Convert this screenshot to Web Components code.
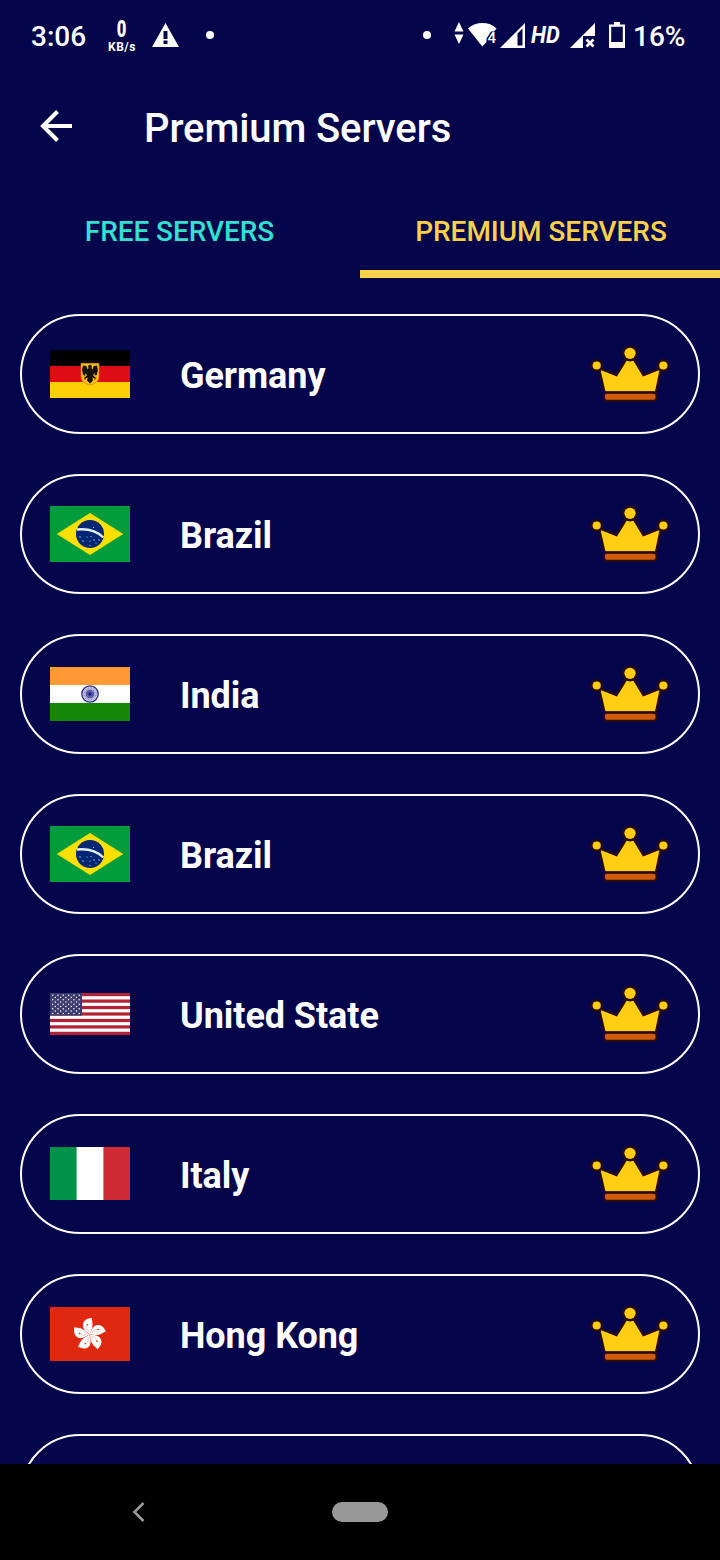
<!DOCTYPE html>
<html lang="en">
<head>
<meta charset="utf-8">
<title>Premium Servers</title>
<style>
  html, body {
    margin: 0;
    height: 100%;
    background: #05054b;
  }
</style>
</head>
<body>
<servers-screen></servers-screen>

<script>
/**
 * Status Bar Component
 * Clock, network speed, signal and battery
 */
class StatusBar extends HTMLElement {
  constructor() {
    super();
    this.attachShadow({ mode: 'open' });
  }

  connectedCallback() {
    this.render();
  }

  render() {
    this.shadowRoot.innerHTML = `
      <style>
        :host {
          display: flex;
          justify-content: space-between;
          height: 72px;
          padding: 0 35px 0 31px;
          box-sizing: border-box;
          font-weight: 500;
          font-size: 28px;
          color: #fff;
        }

        .group {
          display: flex;
          align-items: center;
          height: 72px;
        }

        svg {
          display: block;
          flex: none;
          fill: #fff;
        }

        .clock {
          width: 77px;
          padding-top: 1px;
        }

        .speed {
          display: flex;
          flex-direction: column;
          align-items: center;
          width: 28px;
          margin-right: 16px;
          font-weight: 700;
        }

        .speed b {
          font-size: 23px;
          line-height: 22px;
          transform: scaleX(0.72);
        }

        .speed small {
          font-size: 12px;
          line-height: 12px;
          letter-spacing: 0.5px;
        }

        .dot {
          width: 8px;
          height: 8px;
          border-radius: 50%;
          background: #fff;
          margin-top: -2px;
        }

        .warning { margin: 0 27px 2px 0; }
        .arrows { margin: 0 4px 6px 23px; }
        .wifi { margin-bottom: 3px; }
        .signal { margin-left: 3px; }

        .signal,
        .signal2 {
          margin-bottom: 1px;
        }

        .hd {
          width: 30px;
          margin: 0 9px 2px 6px;
          font-size: 24px;
          font-style: italic;
          font-weight: 700;
          white-space: nowrap;
        }

        .hd span {
          display: inline-block;
          transform: scaleX(0.91);
          transform-origin: left;
        }

        .battery { margin: 0 8px 2px 14px; }

        .level {
          width: 52px;
          padding-top: 1px;
          white-space: nowrap;
        }
      </style>

      <div class="group">
        <span class="clock">3:06</span>
        <span class="speed"><b>0</b><small>KB/s</small></span>
        <svg class="warning" width="27" height="24" viewBox="0 0 27 24">
          <path fill-rule="evenodd" d="M13.500 0 27 24H0zM11.500 8v8h4V8zM11.500 17.500v3.500h4v-3.500z"/>
        </svg>
        <span class="dot"></span>
      </div>

      <div class="group">
        <span class="dot"></span>
        <svg class="arrows" width="10" height="22" viewBox="0 0 10 22">
          <path d="M5 0 9.500 9.500h-9zM5 22 .5 12.500h9z"/>
        </svg>
        <svg class="wifi" width="29" height="24" viewBox="0 0 29 24">
          <path d="M0 5.500C8-1.800 21-1.800 28.500 5.500L26 8.400h-3L18.500 15.500V19L14.300 23.500z"/>
          <text x="19.500" y="19.500" font-size="15" font-weight="500">4</text>
        </svg>
        <svg class="signal" width="25" height="25" viewBox="0 0 25 25">
          <path fill-rule="evenodd" d="M25 0V25H0zM17.500 10.500V22.500H22.500V5.500z"/>
        </svg>
        <span class="hd"><span>HD</span></span>
        <svg class="signal2" width="25" height="25" viewBox="0 0 25 25">
          <path d="M25 0V13H13V25H0z"/>
          <path d="M16.500 16.500 23.500 23.500M23.500 16.500 16.500 23.500" fill="none" stroke="#fff" stroke-width="2.600"/>
        </svg>
        <svg class="battery" width="16" height="26" viewBox="0 0 16 26">
          <path fill-rule="evenodd" d="M5 0h6v2.500h5V26H0V2.500h5zM2.200 4.700V20H13.800V4.700z"/>
        </svg>
        <span class="level">16%</span>
      </div>
    `;
  }
}

/**
 * App Bar Component
 * Back arrow and screen title
 */
class AppBar extends HTMLElement {
  constructor() {
    super();
    this.attachShadow({ mode: 'open' });
    this.shadowRoot.innerHTML = `
      <style>
        :host {
          display: flex;
          align-items: center;
          height: 112px;
          padding-left: 40px;
          color: #fff;
        }

        svg {
          display: block;
          margin: 0 72px 4px 0;
        }

        h1 {
          margin: 2px 0 0;
          font-size: 40px;
          font-weight: 500;
          line-height: 48px;
          letter-spacing: -0.1px;
        }
      </style>

      <svg width="32" height="32" viewBox="0 0 32 32" fill="none" stroke="#fff" stroke-width="4">
        <path d="M32 16H4M17.500 1.500 3 16 17.500 30.500"/>
      </svg>
      <h1><slot></slot></h1>
    `;
  }
}

/**
 * Server Tab Component
 * The "active" attribute draws the indicator
 */
class ServerTab extends HTMLElement {
  constructor() {
    super();
    this.attachShadow({ mode: 'open' });
    this.shadowRoot.innerHTML = `
      <style>
        :host {
          display: flex;
          align-items: center;
          justify-content: center;
          box-sizing: border-box;
          height: 94px;
          border-bottom: 8px solid transparent;
          padding: 8px 1px 0 0;
          color: #33e0d0;
          font-size: 28px;
          font-weight: 500;
          letter-spacing: -0.08px;
          white-space: nowrap;
        }

        :host([active]) {
          color: #fad14b;
          border-color: #fad14b;
          padding: 8px 0 0 2px;
          letter-spacing: -0.03px;
        }
      </style>
      <slot></slot>
    `;
  }
}

/**
 * Country Flag Component
 */
const star = (x, y) => `<circle cx="${x}" cy="${y}" r=".75"/>`;

const usStripes = Array.from({ length: 7 }, (_, i) =>
  `<rect y="${(i * 84 / 13).toFixed(2)}" width="80" height="3.230"/>`).join('');

const usStars = Array.from({ length: 9 }, (_, row) =>
  Array.from({ length: row % 2 ? 5 : 6 }, (_, col) =>
    star((row % 2 ? 5.3 : 2.7) + col * 5.3, 2.3 + row * 2.26)).join('')).join('');

const indiaSpokes = Array.from({ length: 12 }, (_, i) =>
  `<path d="M40 19.500V34.500" transform="rotate(${i * 15} 40 27)"/>`).join('');

const petals = Array.from({ length: 5 }, (_, i) => `
  <g transform="translate(39.500 27.500) rotate(${i * 72 - 9})">
    <path fill="#fff" d="M0 0C-2-3-6-6-5-10.500C-4-14.500 0-16.500 5-15.800C4-14 5.500-11 4-7C3-4 1-3 0 0z"/>
    <path fill="none" stroke="#f0917f" stroke-width=".5" d="M0-3C-2-5-2-7-.5-10"/>
    <circle cx="-.5" cy="-10" r=".8" fill="#de2910"/>
  </g>`).join('');

const FLAGS = {
  de: [48, `
    <path fill="#000" d="M0 0h80v16H0z"/>
    <path fill="#dd0c15" d="M0 16h80v16H0z"/>
    <path fill="#ffce05" d="M0 32h80v16H0z"/>
    <path fill="#f6bd14" stroke="#c98a10" stroke-width=".6" d="M31 13.300h18V26c0 5-4 8.700-9 8.700S31 31 31 26z"/>
    <path fill="#17100a" d="M40 14.500l2 1.500-.6 2 1 1.500 1.300-3.500 3.200-.5 1 4-1 5.500-2 .5-.6-2.500-1.200 2.500 3 2.500-.5 1-3.300-1.500.7 3-3 3-3-3 .7-3L34.400 29l-.5-1 3-2.500-1.200-2.500-.6 2.500-2-.5-1-5.500 1-4 3.200.5 1.300 3.500 1-1.500-.6-2z"/>
    <path fill="none" stroke="#c81c18" stroke-width="1" d="M34 28.500l1.500 1M46 28.500l-1.500 1"/>`],
  br: [56, `
    <path fill="#009b3a" d="M0 0h80v56H0z"/>
    <path fill="#fedf00" d="M40 7 73.300 28 40 49 6.700 28z"/>
    <circle cx="40" cy="28" r="14" fill="#002776"/>
    <path fill="none" stroke="#e4f2ea" stroke-width="2.300" d="M27 23.500C37 22.500 47 25 53.300 31.500"/>
    <g fill="#c9d3e8">
      <circle cx="30" cy="31" r=".7"/><circle cx="33" cy="35" r=".7"/>
      <circle cx="37" cy="31" r=".6"/><circle cx="41" cy="30.500" r=".6"/>
      <circle cx="40" cy="35" r=".6"/><circle cx="44" cy="34" r=".7"/>
      <circle cx="49" cy="34" r=".7"/><circle cx="46" cy="37" r=".6"/>
      <circle cx="40" cy="39.500" r=".6"/><circle cx="43.500" cy="21.500" r=".6"/>
    </g>`],
  in: [54, `
    <path fill="#ff9933" d="M0 0h80v18H0z"/>
    <path fill="#fff" d="M0 18h80v18H0z"/>
    <path fill="#138808" d="M0 36h80v18H0z"/>
    <circle cx="40" cy="27" r="8.200" fill="#d3d3ee" stroke="#2b2b84" stroke-width="1.300"/>
    <g stroke="#5a5aa8" stroke-width=".4">${indiaSpokes}</g>
    <circle cx="40" cy="27" r="4.300" fill="#5b5ba9"/>
    <circle cx="40" cy="27" r="1.700" fill="#20207c"/>`],
  us: [42, `
    <path fill="#fff" d="M0 0h80v42H0z"/>
    <g fill="#b22234">${usStripes}</g>
    <path fill="#3c3b6e" d="M0 0h32v22.600H0z"/>
    <g fill="#fff">${usStars}</g>`],
  it: [53, `
    <path fill="#fff" d="M0 0h80v53H0z"/>
    <path fill="#009246" d="M0 0h26.600v53H0z"/>
    <path fill="#ce2b37" d="M53.400 0H80v53H53.400z"/>`],
  hk: [54, `
    <path fill="#de2910" d="M0 0h80v54H0z"/>
    ${petals}`]
};

class CountryFlag extends HTMLElement {
  constructor() {
    super();
    this.attachShadow({ mode: 'open' });
  }

  connectedCallback() {
    const [height, art] = FLAGS[this.getAttribute('code')];
    this.shadowRoot.innerHTML = `
      <style>
        :host {
          display: block;
          width: 80px;
        }

        /* odd heights round up a pixel instead of down */
        :host([code="it"]) {
          padding-bottom: 1px;
        }

        svg {
          display: block;
        }
      </style>
      <svg width="80" height="${height}" viewBox="0 0 80 ${height}">${art}</svg>
    `;
  }
}

/**
 * Crown Icon Component
 * Marks a premium server
 */
class CrownIcon extends HTMLElement {
  constructor() {
    super();
    this.attachShadow({ mode: 'open' });
    this.shadowRoot.innerHTML = `
      <style>
        :host {
          display: block;
          width: 80px;
          height: 60px;
          padding-top: 2px;
        }

        svg {
          display: block;
        }
      </style>
      <svg width="80" height="60" viewBox="0 0 80 60">
        <g fill="#ffcd12" stroke="#260a1c" stroke-width="5" stroke-linejoin="round" paint-order="stroke">
          <path d="M10.500 25 27 31.500 36.800 15.500H43.200L53 31.500 69.500 25 65 46.500H15.500z"/>
          <rect x="15" y="48.700" width="50.500" height="6" rx="2" fill="#d35d04"/>
          <circle cx="40" cy="8.300" r="5.600"/>
          <circle cx="6.700" cy="20.500" r="4.100"/>
          <circle cx="73.300" cy="20.500" r="4.100"/>
        </g>
      </svg>
    `;
  }
}

/**
 * Server Card Component
 * Flag, country name and crown in a rounded outline
 */
class ServerCard extends HTMLElement {
  constructor() {
    super();
    this.attachShadow({ mode: 'open' });
  }

  connectedCallback() {
    this.render();
  }

  render() {
    this.shadowRoot.innerHTML = `
      <style>
        :host {
          display: flex;
          flex: none;
          align-items: center;
          box-sizing: border-box;
          height: 120px;
          padding: 0 28px;
          border: 2px solid #fff;
          border-radius: 60px;
          color: #fff;
        }

        .name {
          flex: 1;
          margin: 3px 0 0 50px;
          font-size: 36px;
          font-weight: 700;
          letter-spacing: -0.06px;
        }
      </style>

      <country-flag code="${this.getAttribute('flag')}"></country-flag>
      <span class="name"><slot></slot></span>
      <crown-icon></crown-icon>
    `;
  }
}

/**
 * Nav Bar Component
 * System back and home buttons
 */
class NavBar extends HTMLElement {
  constructor() {
    super();
    this.attachShadow({ mode: 'open' });
    this.shadowRoot.innerHTML = `
      <style>
        :host {
          display: grid;
          grid-template-columns: 1fr 56px 1fr;
          align-items: center;
          height: 96px;
          background: #000;
        }

        svg {
          display: block;
          margin-left: 132px;
        }

        .home {
          height: 20px;
          border-radius: 10px;
          background: #999;
        }
      </style>

      <svg width="14" height="20" viewBox="0 0 14 20" fill="none" stroke="#999" stroke-width="2.600">
        <path d="M11.500 1 2.500 10 11.500 19"/>
      </svg>
      <div class="home"></div>
    `;
  }
}

/**
 * Servers Screen
 */
class ServersScreen extends HTMLElement {
  constructor() {
    super();
    this.attachShadow({ mode: 'open' });
    this.shadowRoot.innerHTML = `
      <style>
        :host {
          display: flex;
          flex-direction: column;
          width: 720px;
          height: 1560px;
          overflow: hidden;
          background: #05054b;
          font-family: Roboto, sans-serif;
        }

        .tabs {
          display: grid;
          grid-template-columns: 1fr 1fr;
        }

        .list {
          display: flex;
          flex: 1;
          flex-direction: column;
          gap: 40px;
          min-height: 0;
          padding: 36px 20px 0;
          overflow: hidden;
        }
      </style>

      <status-bar></status-bar>
      <app-bar>Premium Servers</app-bar>
      <div class="tabs">
        <server-tab>FREE SERVERS</server-tab>
        <server-tab active>PREMIUM SERVERS</server-tab>
      </div>
      <div class="list">
        <server-card flag="de">Germany</server-card>
        <server-card flag="br">Brazil</server-card>
        <server-card flag="in">India</server-card>
        <server-card flag="br">Brazil</server-card>
        <server-card flag="us">United State</server-card>
        <server-card flag="it">Italy</server-card>
        <server-card flag="hk">Hong Kong</server-card>
        <server-card flag="de"></server-card>
      </div>
      <nav-bar></nav-bar>
    `;
  }
}

customElements.define('status-bar', StatusBar);
customElements.define('app-bar', AppBar);
customElements.define('server-tab', ServerTab);
customElements.define('country-flag', CountryFlag);
customElements.define('crown-icon', CrownIcon);
customElements.define('server-card', ServerCard);
customElements.define('nav-bar', NavBar);
customElements.define('servers-screen', ServersScreen);
</script>
</body>
</html>
